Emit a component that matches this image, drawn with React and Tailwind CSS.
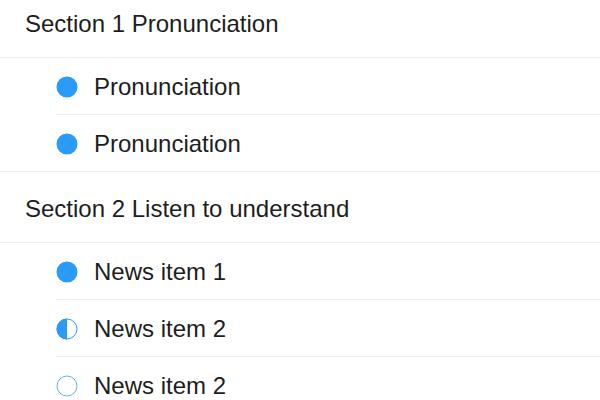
const sections = [
  {
    title: "Section 1 Pronunciation",
    items: [
      { label: "Pronunciation", state: "full" },
      { label: "Pronunciation", state: "full" },
    ],
  },
  {
    title: "Section 2 Listen to understand",
    items: [
      { label: "News item 1", state: "full" },
      { label: "News item 2", state: "half" },
      { label: "News item 2", state: "empty" },
    ],
  },
];

function Progress({ state }) {
  if (state === "full") {
    return (
      <svg width="22" height="22" viewBox="0 0 22 22">
        <circle cx="11" cy="11" r="10.5" fill="#2b9bfb" />
      </svg>
    );
  }
  if (state === "half") {
    return (
      <svg width="22" height="22" viewBox="0 0 22 22">
        <circle cx="11" cy="11" r="10" fill="#fff" stroke="#2b9bfb" strokeWidth="1" />
        <path d="M11 0.5 A10.5 10.5 0 0 0 11 21.5 Z" fill="#2b9bfb" />
      </svg>
    );
  }
  return (
    <svg width="22" height="22" viewBox="0 0 22 22">
      <circle cx="11" cy="11" r="10" fill="#fff" stroke="#5fb2fc" strokeWidth="1" />
    </svg>
  );
}

export default function App() {
  return (
    <div className="w-[600px] h-[400px] overflow-hidden bg-white font-['Liberation_Sans',Arial,sans-serif] text-[#1d1d1d]">
      <div className="-mt-[13px]">
        {sections.map((section, si) => (
          <div key={si}>
            <div className="h-[71px] flex items-center pl-[25px] pt-[3px] border-b border-[#efefef] text-[24px]">
              {section.title}
            </div>
            {section.items.map((item, ii) => {
              const last = ii === section.items.length - 1;
              return (
                <div key={ii} className={last ? "border-b border-[#efefef]" : ""}>
                  <div
                    className={
                      last
                        ? "ml-[56px] h-[56px] pt-[2px] flex items-center gap-[16px] text-[24px]"
                        : "ml-[56px] h-[57px] pt-[2px] flex items-center gap-[16px] text-[24px] border-b border-[#efefef]"
                    }
                  >
                    <Progress state={item.state} />
                    <span>{item.label}</span>
                  </div>
                </div>
              );
            })}
          </div>
        ))}
      </div>
    </div>
  );
}
